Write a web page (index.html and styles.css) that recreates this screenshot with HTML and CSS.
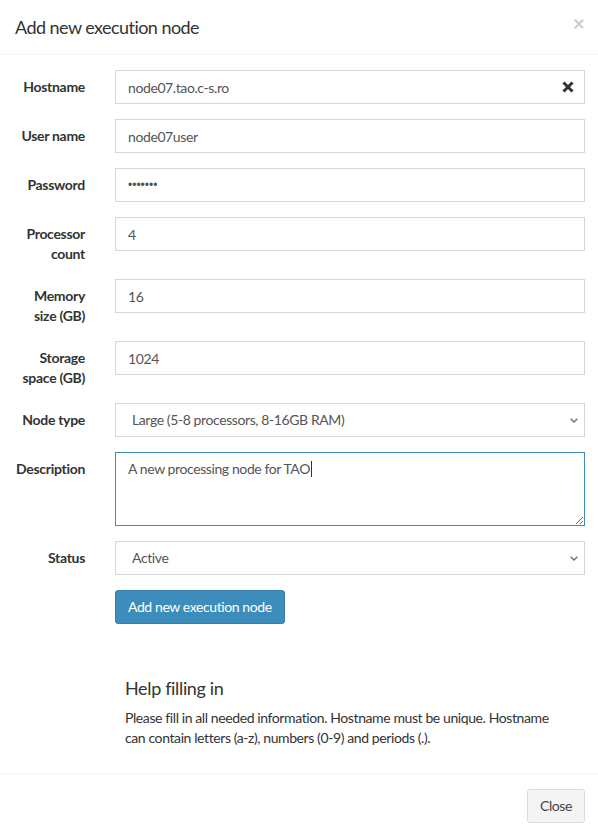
FILE: index.html
```html
<!DOCTYPE html>
<html lang="en">
<head>
<meta charset="utf-8">
<title>Add new execution node</title>
<link rel="stylesheet" href="styles.css">
</head>
<body>
<div class="modal">
  <div class="modal-header">
    <button class="close" type="button">&times;</button>
    <h4 class="modal-title">Add new execution node</h4>
  </div>
  <div class="modal-body">
    <form class="form-horizontal">
      <div class="form-group">
        <label class="control-label">Hostname</label>
        <div class="field">
          <input class="form-control" type="text" value="node07.tao.c-s.ro">
          <span class="clear-icon"><svg width="12" height="12" viewBox="0 0 12 12"><path d="M1.5 1.5 L10.5 10.5 M10.5 1.5 L1.5 10.5" stroke="#333" stroke-width="3" stroke-linecap="butt"/></svg></span>
        </div>
      </div>
      <div class="form-group">
        <label class="control-label">User name</label>
        <div class="field"><input class="form-control" type="text" value="node07user"></div>
      </div>
      <div class="form-group">
        <label class="control-label">Password</label>
        <div class="field"><input class="form-control password" type="password" value="1234567"></div>
      </div>
      <div class="form-group">
        <label class="control-label">Processor count</label>
        <div class="field"><input class="form-control" type="text" value="4"></div>
      </div>
      <div class="form-group">
        <label class="control-label">Memory size (GB)</label>
        <div class="field"><input class="form-control" type="text" value="16"></div>
      </div>
      <div class="form-group">
        <label class="control-label">Storage space (GB)</label>
        <div class="field"><input class="form-control" type="text" value="1024"></div>
      </div>
      <div class="form-group">
        <label class="control-label">Node type</label>
        <div class="field">
          <select class="form-control select">
            <option>Large (5-8 processors, 8-16GB RAM)</option>
          </select>
          <svg class="chevron" width="8" height="5" viewBox="0 0 8 5"><path d="M0.7 0.7 L4 4 L7.3 0.7" fill="none" stroke="#6b6b6b" stroke-width="1.3"/></svg>
        </div>
      </div>
      <div class="form-group">
        <label class="control-label">Description</label>
        <div class="field">
          <div class="form-control textarea" role="textbox">A new processing node for TAO<span class="caret"></span></div>
        </div>
      </div>
      <div class="form-group">
        <label class="control-label">Status</label>
        <div class="field">
          <select class="form-control select">
            <option>Active</option>
          </select>
          <svg class="chevron" width="8" height="5" viewBox="0 0 8 5"><path d="M0.7 0.7 L4 4 L7.3 0.7" fill="none" stroke="#6b6b6b" stroke-width="1.3"/></svg>
        </div>
      </div>
      <div class="form-group">
        <div class="field offset">
          <button class="btn btn-primary" type="button">Add new execution node</button>
        </div>
      </div>
    </form>
    <div class="help">
      <h4>Help filling in</h4>
      <p>Please fill in all needed information. Hostname must be unique. Hostname can contain letters (a-z), numbers (0-9) and periods (.).</p>
    </div>
  </div>
  <div class="modal-footer">
    <button class="btn btn-default" type="button">Close</button>
  </div>
</div>
</body>
</html>
```

FILE: styles.css
```css
html, body {
  margin: 0;
  padding: 0;
  overflow: hidden;
  background: #fff;
}
body {
  font-family: Lato, "Open Sans", sans-serif;
  font-size: 14px;
  line-height: 20px;
  letter-spacing: -0.4px;
  color: #333;
}
.modal {
  width: 598px;
  background: #fff;
}
.modal-header {
  padding: 15px;
  border-bottom: 1px solid #f4f4f4;
}
.modal-title {
  margin: 0;
  font-size: 18px;
  font-weight: 400;
  line-height: 24px;
  letter-spacing: -0.55px;
  color: #333;
}
.close {
  float: right;
  margin: -4px -2px 0 0;
  padding: 0;
  border: 0;
  background: transparent;
  font-family: Lato, sans-serif;
  font-size: 21px;
  font-weight: 700;
  line-height: 24px;
  color: #000;
  opacity: 0.2;
}
.modal-body {
  padding: 15px 13px 15px 15px;
}
.form-horizontal {
  margin: 0;
}
.form-group {
  display: flex;
  align-items: flex-start;
  margin-bottom: 15px;
}
.control-label {
  width: 70px;
  flex: none;
  margin-right: 30px;
  padding-top: 7px;
  text-align: right;
  font-weight: 700;
  letter-spacing: -0.3px;
  color: #333;
}
.field {
  flex: 1;
  position: relative;
}
.field.offset {
  margin-left: 100px;
}
.form-control {
  display: block;
  box-sizing: border-box;
  width: 100%;
  height: 34px;
  margin: 0;
  padding: 6px 12px;
  border: 1px solid #d2d6de;
  border-radius: 0;
  background: #fff;
  font-family: Lato, "Open Sans", sans-serif;
  font-size: 14px;
  line-height: 20px;
  letter-spacing: -0.4px;
  color: #555;
  outline: none;
}
.password {
  font-family: "Liberation Sans", sans-serif;
  font-size: 12px;
  letter-spacing: 0;
}
.select {
  appearance: none;
  -webkit-appearance: none;
  padding-left: 16px;
}
.chevron {
  position: absolute;
  right: 7px;
  top: 15px;
  pointer-events: none;
}
.clear-icon {
  position: absolute;
  right: 11px;
  top: 11px;
  width: 12px;
  height: 12px;
  line-height: 0;
}
.textarea {
  height: 74px;
  border-color: #3c8dbc;
  overflow: auto;
  resize: vertical;
  white-space: pre-wrap;
}
.caret {
  display: inline-block;
  width: 1px;
  height: 16px;
  margin-left: 1px;
  vertical-align: -3px;
  background: #333;
}
.btn {
  display: inline-block;
  box-sizing: border-box;
  height: 34px;
  padding: 6px 12px;
  border: 1px solid transparent;
  border-radius: 3px;
  font-family: Lato, "Open Sans", sans-serif;
  font-size: 14px;
  line-height: 20px;
  letter-spacing: -0.4px;
  font-weight: 400;
  cursor: pointer;
}
.btn-primary {
  background: #3c8dbc;
  border-color: #367fa9;
  color: #fff;
}
.btn-default {
  background: #f4f4f4;
  border-color: #ddd;
  color: #444;
}
.help {
  padding: 39px 23px 0 110px;
}
.help h4 {
  margin: 0 0 10px;
  font-size: 18px;
  font-weight: 400;
  line-height: 20px;
  letter-spacing: -0.35px;
  color: #333;
}
.help p {
  margin: 0 0 10px;
}
.modal-footer {
  padding: 15px 13px 15px 15px;
  border-top: 1px solid #f4f4f4;
  text-align: right;
}
```
